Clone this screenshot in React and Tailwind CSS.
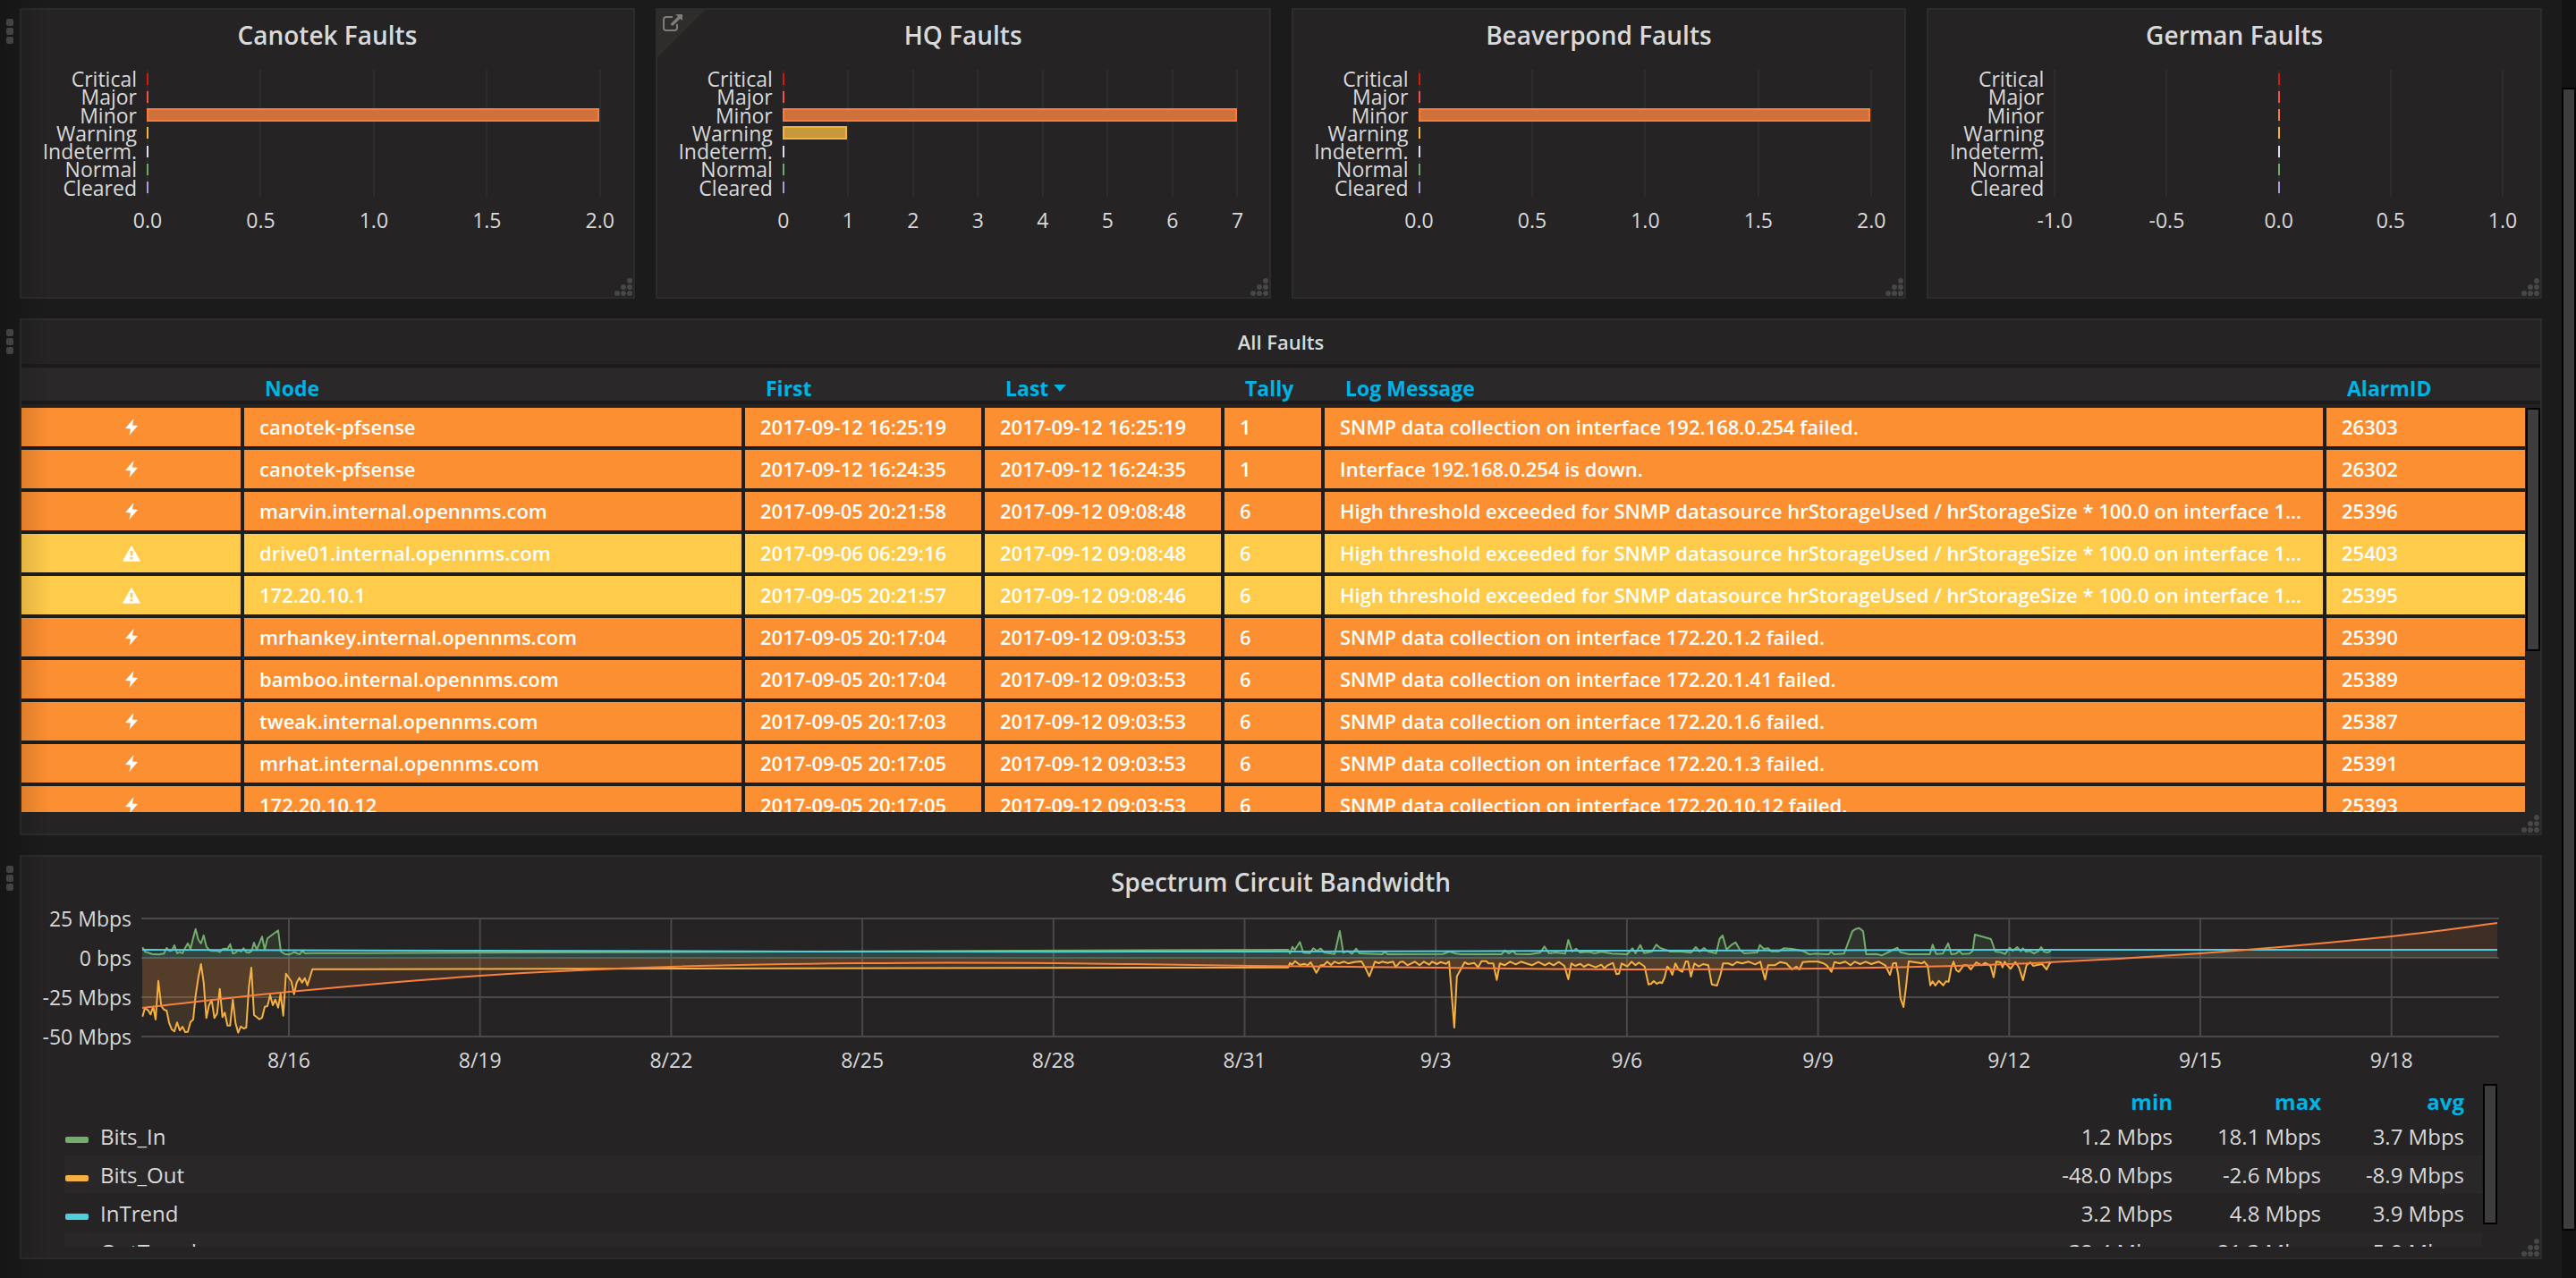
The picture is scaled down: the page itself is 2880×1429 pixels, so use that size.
import React from "react";

const SEVERITIES = [
  { name: "Critical", bar: "border-[#c9190b] bg-[#a01c11]", mark: "bg-[#d41a0b]" },
  { name: "Major", bar: "border-[#ee4f44] bg-[#b9443c]", mark: "bg-[#f25247]" },
  { name: "Minor", bar: "border-[#fb7c3a] bg-[#cf713d]", mark: "bg-[#fb7c3a]" },
  { name: "Warning", bar: "border-[#f4b23f] bg-[#c7983c]", mark: "bg-[#f4b23f]" },
  { name: "Indeterm.", bar: "border-[#dedaf4] bg-[#b0adc0]", mark: "bg-[#dedaf4]" },
  { name: "Normal", bar: "border-[#6dab68] bg-[#5b8a57]", mark: "bg-[#6dab68]" },
  { name: "Cleared", bar: "border-[#a79ddb] bg-[#8780ad]", mark: "bg-[#a79ddb]" },
];

const FAULT_PANELS = [
  { title: "Canotek Faults", ticks: ["0.0", "0.5", "1.0", "1.5", "2.0"], min: 0, max: 2, values: [0, 0, 2, 0, 0, 0, 0], inset: "pr-[37px]" },
  { title: "HQ Faults", ticks: ["0", "1", "2", "3", "4", "5", "6", "7"], min: 0, max: 7, values: [0, 0, 7, 1, 0, 0, 0], inset: "pr-[35px]", linked: true },
  { title: "Beaverpond Faults", ticks: ["0.0", "0.5", "1.0", "1.5", "2.0"], min: 0, max: 2, values: [0, 0, 2, 0, 0, 0, 0], inset: "pr-[37px]" },
  { title: "German Faults", ticks: ["-1.0", "-0.5", "0.0", "0.5", "1.0"], min: -1, max: 1, values: [0, 0, 0, 0, 0, 0, 0], inset: "pr-[42px]" },
];

const HIGH = "High threshold exceeded for SNMP datasource hrStorageUsed / hrStorageSize * 100.0 on interface 1...";

const ALARMS = [
  ["minor", "canotek-pfsense", "2017-09-12 16:25:19", "2017-09-12 16:25:19", "1", "SNMP data collection on interface 192.168.0.254 failed.", "26303"],
  ["minor", "canotek-pfsense", "2017-09-12 16:24:35", "2017-09-12 16:24:35", "1", "Interface 192.168.0.254 is down.", "26302"],
  ["minor", "marvin.internal.opennms.com", "2017-09-05 20:21:58", "2017-09-12 09:08:48", "6", HIGH, "25396"],
  ["warning", "drive01.internal.opennms.com", "2017-09-06 06:29:16", "2017-09-12 09:08:48", "6", HIGH, "25403"],
  ["warning", "172.20.10.1", "2017-09-05 20:21:57", "2017-09-12 09:08:46", "6", HIGH, "25395"],
  ["minor", "mrhankey.internal.opennms.com", "2017-09-05 20:17:04", "2017-09-12 09:03:53", "6", "SNMP data collection on interface 172.20.1.2 failed.", "25390"],
  ["minor", "bamboo.internal.opennms.com", "2017-09-05 20:17:04", "2017-09-12 09:03:53", "6", "SNMP data collection on interface 172.20.1.41 failed.", "25389"],
  ["minor", "tweak.internal.opennms.com", "2017-09-05 20:17:03", "2017-09-12 09:03:53", "6", "SNMP data collection on interface 172.20.1.6 failed.", "25387"],
  ["minor", "mrhat.internal.opennms.com", "2017-09-05 20:17:05", "2017-09-12 09:03:53", "6", "SNMP data collection on interface 172.20.1.3 failed.", "25391"],
  ["minor", "172.20.10.12", "2017-09-05 20:17:05", "2017-09-12 09:03:53", "6", "SNMP data collection on interface 172.20.10.12 failed.", "25393"],
];

const LEGEND = [
  ["Bits_In", "bg-[#73ad6c]", "1.2 Mbps", "18.1 Mbps", "3.7 Mbps"],
  ["Bits_Out", "bg-[#f4b142]", "-48.0 Mbps", "-2.6 Mbps", "-8.9 Mbps"],
  ["InTrend", "bg-[#4fcfde]", "3.2 Mbps", "4.8 Mbps", "3.9 Mbps"],
  ["OutTrend", "bg-[#f9803d]", "-32.4 Mbps", "21.3 Mbps", "-5.9 Mbps"],
];

/* Time series samples, in chart units: 2635 wide, 132 high, zero at 44. */
const project = (samples, kx, ox, oy) =>
  samples.trim().split(/\s+/).map((p) => {
    const [x, y] = p.split(",").map(Number);
    return [x / kx + ox, y / 3 - oy];
  });

const BITS_IN = [
  ...project(
    `58,148 66,162 90,170 112,172 130,169 139,150 148,160 157,158 165,141 174,168 183,163 192,168 201,150 210,134 219,153
     228,116 236,86 245,122 254,135 263,108 272,145 281,156 290,160 308,160 317,164 326,154 335,152 343,154 352,137 361,169
     370,166 379,157 388,162 397,151 406,164 415,166 424,160 432,132 441,156 459,112 468,156 477,118 513,91 522,162 535,170
     549,172 567,164 585,171 594,160 603,168 620,167 780,167`, 3, -19, 17),
  ...project(
    `83,216 87,228 93,206 98,217 110,190 118,226 133,227 141,211 149,220 158,212 166,225 190,230 202,153 210,226 220,220
     230,230 240,212 247,228 300,231 306,223 312,231 440,230 455,222 470,229 480,231 575,231 583,218 592,229 601,219 608,230
     640,231 664,226 674,205 684,228 700,225 722,229 729,183 738,222 747,212 756,225 775,223 790,228 805,223 830,229 865,231
     877,211 884,228 895,200 904,227 922,222 932,199 941,210 955,217 965,222 990,222 1012,226 1023,207 1032,222 1042,210
     1052,222 1070,228 1078,180 1085,168 1094,215 1105,200 1115,191 1125,217 1135,228 1165,225 1171,200 1180,213 1190,211
     1197,221 1215,221 1226,211 1245,213 1270,220 1285,231 1300,229 1330,231 1335,222 1342,231 1365,229 1384,154 1392,146
     1400,143 1409,154 1416,231 1440,230 1452,235 1470,222 1488,209 1495,224 1515,231 1563,231`, 2.063, 1241, 37),
  ...project(
    `122,199 130,230 145,229 157,194 164,231 175,229 182,219 188,230 205,229 212,220 217,165 253,180 263,222 275,224
     285,230 295,209 302,220 312,207 320,221 325,211 332,223 340,220 350,228 360,220 366,207 372,222 380,225 388,220`, 2.01, 1941, 37),
];

const BITS_OUT = [
  ...project(
    `58,380 66,352 76,358 85,373 94,347 102,390 111,260 121,345 130,357 139,360 147,400 156,423 165,430 174,400 183,427
     192,414 201,432 210,431 219,398 228,390 236,310 245,250 254,204 263,265 272,385 281,342 290,325 299,385 308,370 317,287
     326,382 334,367 343,410 352,410 361,323 370,402 379,434 388,413 397,420 406,417 415,280 423,216 432,375 441,382 450,389
     459,384 468,347 477,345 486,308 495,342 503,323 513,350 521,304 530,377 539,236 557,262 566,305 575,266 584,250 593,266
     602,251 611,275 628,221 780,221`, 3, -19, 17),
  ...project(
    `83,275 87,260 92,266 99,254 110,267 120,263 128,268 135,258 148,293 158,268 165,268 173,256 182,267 190,256 200,262
     212,256 222,262 235,257 252,255 262,280 270,305 283,256 292,261 300,256 312,260 325,256 331,274 341,257 348,256 358,268
     375,256 386,268 396,256 408,266 415,256 426,264 435,257 447,263 454,255 466,477 472,305 490,258 498,264 512,260 521,275
     529,254 540,254 545,262 556,262 564,317 571,262 582,268 595,256 608,265 620,256 632,262 645,268 660,257 675,268 685,260
     695,268 707,257 720,270 729,315 736,262 745,270 757,263 765,273 775,265 792,275 805,266 812,278 820,268 832,260 840,298
     846,296 852,262 865,272 875,256 884,268 892,259 905,272 914,332 920,330 926,321 933,330 940,325 945,328 951,310 957,272
     963,280 969,300 976,262 984,284 992,290 1000,255 1005,256 1012,306 1020,262 1030,272 1040,264 1052,268 1060,332
     1072,336 1080,300 1086,262 1098,262 1108,268 1118,257 1130,262 1145,256 1160,265 1172,256 1178,290 1183,316 1190,268
     1205,268 1218,257 1232,262 1245,282 1255,272 1262,282 1270,257 1285,256 1305,256 1318,262 1325,268 1336,290 1343,257
     1355,262 1368,256 1380,268 1390,256 1402,264 1415,256 1428,264 1445,256 1460,268 1471,300 1478,262 1485,260 1490,300
     1495,378 1502,408 1508,340 1514,255 1530,258 1545,262 1550,256 1558,270 1564,335`, 2.063, 1241, 37),
  ...project(
    `122,322 128,336 136,320 146,335 152,322 158,323 164,275 169,256 175,284 181,290 192,268 200,268 208,282 220,258
     232,268 240,260 252,270 259,308 265,256 275,258 279,275 284,256 290,268 297,280 308,257 316,275 325,318 333,268
     342,258 348,270 360,266 368,264 378,282 385,262 388,260`, 2.01, 1941, 37),
];

const IN_TREND = [[0, 35], [378, 36], [800, 37], [1241, 37], [1661, 36], [2087, 35], [2633, 35]];
const OUT_TREND = [[0, 100], [164, 82], [378, 64], [590, 54], [800, 50], [1020, 50], [1241, 53], [1446, 55], [1661, 57], [1874, 56], [2087, 51], [2301, 39], [2515, 20], [2633, 5]];

const f = (n) => n.toFixed(1);
const straight = (pts) => "M" + pts.map(([x, y]) => `${f(x)} ${f(y)}`).join("L");
const smooth = (pts) =>
  pts.reduce((d, [x, y], i) => {
    if (i === 0) return `M${x} ${y}`;
    const a = pts[i - 1];
    const z = pts[i - 2] || a;
    const n = pts[i + 1] || [x, y];
    return `${d}C${f(a[0] + (x - z[0]) / 6)} ${f(a[1] + (y - z[1]) / 6)} ${f(x - (n[0] - a[0]) / 6)} ${f(y - (n[1] - a[1]) / 6)} ${x} ${y}`;
  }, "");

const SERIES = [
  { d: straight(BITS_IN), pts: BITS_IN, color: "#73ad6c" },
  { d: straight(BITS_OUT), pts: BITS_OUT, color: "#f4b142" },
  { d: smooth(IN_TREND), pts: IN_TREND, color: "#4fcfde" },
  { d: smooth(OUT_TREND), pts: OUT_TREND, color: "#f9803d" },
];

const DATES = ["8/16", "8/19", "8/22", "8/25", "8/28", "8/31", "9/3", "9/6", "9/9", "9/12", "9/15", "9/18"];
const dateX = (i) => 164 + i * 213.7;

function Grip() {
  return (
    <svg className="absolute right-0 bottom-0 size-[21px] fill-[#474747]" viewBox="0 0 21 21" aria-hidden="true">
      {[[17, 3], [10, 10], [17, 10], [3, 17], [10, 17], [17, 17]].map(([x, y]) => (
        <circle key={`${x}-${y}`} cx={x} cy={y} r="3" />
      ))}
    </svg>
  );
}

function RowMenu() {
  return (
    <button type="button" aria-label="Row menu" className="absolute top-3 -left-[15px] flex w-2 flex-col gap-[2px]">
      <span className="h-2 rounded-[2px] bg-[#4f4f4f]" />
      <span className="h-2 rounded-[2px] bg-[#4f4f4f]" />
      <span className="h-2 rounded-[2px] bg-[#4f4f4f]" />
    </button>
  );
}

function Panel({ className = "", children }) {
  return (
    <section className={`relative min-w-0 border-2 border-[#2c2c2c] bg-[#252324] ${className}`}>
      {children}
      <Grip />
    </section>
  );
}

function FaultPanel({ panel }) {
  const { title, ticks, min, max, values, inset, linked } = panel;
  const range = max - min;
  return (
    <Panel className="pb-[70px]">
      {linked && (
        <a href="#hq" aria-label="Panel links" className="absolute top-0 left-0 size-[54px] bg-linear-135 from-[#2e2d2b] from-50% to-transparent to-50%">
          <svg className="mt-[5px] ml-[6px] h-[19px] w-[22px]" viewBox="0 0 22 19" fill="none" aria-hidden="true">
            <path d="M11 3H4Q1 3 1 6V15Q1 18 4 18H13Q16 18 16 15V11" stroke="#7d7d7c" strokeWidth="2" />
            <path d="M14 0H22V7L19.500 5L11 13L8.500 11L17 2.500Z" fill="#7d7d7c" />
          </svg>
        </a>
      )}
      <h2 className="pt-[6px] text-center text-[28px] leading-[44px] font-semibold">{title}</h2>
      <div className={`mt-[17px] flex text-[23px] ${inset}`}>
        <ul className="grid w-[129px] shrink-0 grid-rows-7 text-right leading-5">
          {SEVERITIES.map((s) => (
            <li key={s.name}>{s.name}</li>
          ))}
        </ul>
        <div className="relative ml-3 grid h-[142px] flex-1 grid-rows-7">
          <div className="absolute inset-0 -mx-px flex justify-between" aria-hidden="true">
            {ticks.map((t) => (
              <i key={t} className="w-[2px] bg-[#2e2d2e]" />
            ))}
          </div>
          {values.map((v, i) => (
            <div key={i} className="relative flex items-center">
              <div
                className={v ? `h-[15px] border-2 ${SEVERITIES[i].bar}` : `h-[13px] w-[2px] ${SEVERITIES[i].mark}`}
                style={{ width: v ? `${(v / range) * 100}%` : undefined, marginLeft: `calc(${(-min / range) * 100}% - 1px)` }}
              />
            </div>
          ))}
        </div>
      </div>
      <div className={`mt-[10px] ml-[141px] flex justify-between text-[23px] leading-8 ${inset}`}>
        {ticks.map((t) => (
          <span key={t} className="flex w-0 justify-center whitespace-nowrap">{t}</span>
        ))}
      </div>
    </Panel>
  );
}

function Bolt() {
  return (
    <svg className="mx-auto h-[19px] w-[14px] fill-white" viewBox="0 0 14 19" role="img" aria-label="Minor">
      <path d="M9.500 0L0 11L6 11.500L4.500 19L14 8L8 7.500Z" />
    </svg>
  );
}

function Warn() {
  return (
    <svg className="mx-auto h-[18px] w-5" viewBox="0 0 20 18" role="img" aria-label="Warning">
      <path d="M10 1L19 17H1Z" fill="#fff" stroke="#fff" strokeWidth="1.500" strokeLinejoin="round" />
      <path d="M8.500 6H11.500L11.200 11.500H8.800ZM8.600 13H11.400V15.500H8.600Z" fill="#ffcb4a" />
    </svg>
  );
}

function AlarmTable() {
  const head = "border-y-4 border-[#1c1b1b] bg-[#2a2829] h-[45px] p-0 pl-[23px] pt-2 text-left align-middle text-[23px]";
  return (
    <div className="relative mt-[3px] h-[501px] overflow-hidden">
      <table className="w-full table-fixed border-separate border-spacing-0 text-[22px] leading-7 font-semibold text-white">
        <colgroup>
          <col className="w-[249px]" />
          <col className="w-[560px]" />
          <col className="w-[268px]" />
          <col className="w-[268px]" />
          <col className="w-[112px]" />
          <col />
          <col className="w-[222px]" />
          <col className="w-[17px]" />
        </colgroup>
        <thead className="text-[#00b3e3]">
          <tr>
            <th className={head} aria-label="Severity" />
            <th className={head}><button type="button">Node</button></th>
            <th className={head}><button type="button">First</button></th>
            <th className={head} aria-sort="descending">
              <button type="button" className="flex items-center gap-[6px]">
                Last
                <svg className="h-[8px] w-[14px] fill-current" viewBox="0 0 14 8" aria-hidden="true"><path d="M0 0H14L7 8Z" /></svg>
              </button>
            </th>
            <th className={head}><button type="button">Tally</button></th>
            <th className={head}><button type="button">Log Message</button></th>
            <th className={head}><button type="button">AlarmID</button></th>
            <th className="h-[45px] border-y-4 border-[#1c1b1b] bg-[#2a2829] p-0" aria-hidden="true" />
          </tr>
          <tr aria-hidden="true"><td colSpan={8} className="h-1 p-0" /></tr>
        </thead>
        <tbody>
          {ALARMS.map(([severity, ...cells]) => {
            const tone = severity === "minor" ? "bg-[#fc8f31]" : "bg-[#ffcb4a]";
            return (
              <tr key={cells[5]}>
                <td className={`h-[47px] border-r-4 border-b-4 border-[#1c1e1c] p-0 ${tone}`}>
                  {severity === "minor" ? <Bolt /> : <Warn />}
                </td>
                {cells.map((c, i) => (
                  <td key={i} className={`truncate border-b-4 border-[#1c1e1c] pt-0 pr-1 pb-[2px] pl-[17px] ${i < 5 ? "border-r-4" : ""} ${tone}`}>{c}</td>
                ))}
                <td className="p-0" />
              </tr>
            );
          })}
        </tbody>
      </table>
      <div className="absolute top-[49px] right-0 h-[272px] w-4 border-2 border-black bg-[#3d3d3d]" />
    </div>
  );
}

function BandwidthChart() {
  return (
    <figure className="pr-[46px] pl-[14px] text-[23px]">
      <div className="flex">
        <div className="-my-[22px] flex w-[109px] flex-col text-right leading-[44px]">
          {["25 Mbps", "0 bps", "-25 Mbps", "-50 Mbps"].map((t) => (
            <span key={t}>{t}</span>
          ))}
        </div>
        <svg className="ml-3 h-[132px] min-w-0 flex-1 overflow-visible" viewBox="0 0 2635 132" preserveAspectRatio="none" fill="none" role="img" aria-label="Spectrum circuit bandwidth over time">
          <g stroke="#4a494a" strokeWidth="2">
            {[0, 44, 88, 132].map((y) => (
              <path key={y} d={`M-1 ${y}H2635`} />
            ))}
            {DATES.map((t, i) => (
              <path key={t} d={`M${f(dateX(i))} 0V132`} />
            ))}
          </g>
          {SERIES.map((s) => (
            <path key={s.color} d={`${s.d}L${f(s.pts[s.pts.length - 1][0])} 44L0 44Z`} fill={s.color} fillOpacity="0.120" />
          ))}
          {SERIES.map((s) => (
            <path key={s.color} d={s.d} stroke={s.color} strokeWidth="2" strokeLinejoin="round" />
          ))}
        </svg>
      </div>
      <div className="relative mt-[10px] ml-[121px] h-8 leading-8">
        {DATES.map((t, i) => (
          <span key={t} className="absolute flex w-0 justify-center" style={{ left: `${(dateX(i) / 2635) * 100}%` }}>{t}</span>
        ))}
      </div>
    </figure>
  );
}

function LegendTable() {
  return (
    <div className="relative mt-[5px] mr-[48px] ml-12 h-[188px] overflow-hidden">
      <div className="mr-[17px]">
        <table className="w-full table-fixed text-right text-2xl leading-8">
          <colgroup>
            <col />
            <col className="w-[190px]" />
            <col className="w-[166px]" />
            <col className="w-[160px]" />
          </colgroup>
          <thead className="text-[#00b3e3]">
            <tr className="h-[43px]">
              <th aria-label="Series" />
              <th className="p-0 pt-2 pr-5"><button type="button">min</button></th>
              <th className="p-0 pt-2 pr-5"><button type="button">max</button></th>
              <th className="p-0 pt-2 pr-5"><button type="button">avg</button></th>
            </tr>
          </thead>
          <tbody>
            {LEGEND.map(([name, swatch, ...stats]) => (
              <tr key={name} className="h-[43px] even:bg-[#292728]">
                <th scope="row" className="p-0 pl-px text-left font-normal">
                  <button type="button" className="flex items-center gap-[13px]">
                    <i className={`mt-2 h-[7px] w-[26px] rounded-[2px] ${swatch}`} />
                    {name}
                  </button>
                </th>
                {stats.map((s) => (
                  <td key={s} className="p-0 pr-5">{s}</td>
                ))}
              </tr>
            ))}
          </tbody>
        </table>
      </div>
      <div className="absolute top-[6px] right-0 h-[157px] w-4 border-2 border-black bg-[#3d3d3d]" />
    </div>
  );
}

export default function App() {
  return (
    <div className="relative flex min-h-screen bg-[#1b1b1b] font-['Open_Sans','Noto_Sans',sans-serif] text-[#d8d9da]">
      <main className="flex min-w-0 flex-1 flex-col gap-[22px] px-[22px] pt-[9px] pb-5">
        <div className="relative grid grid-cols-4 gap-[23px]">
          <RowMenu />
          {FAULT_PANELS.map((p) => (
            <FaultPanel key={p.title} panel={p} />
          ))}
        </div>
        <div className="relative">
          <RowMenu />
          <Panel className="pb-6">
            <h2 className="pt-[2px] text-center text-[22px] leading-[44px] font-semibold">All Faults</h2>
            <AlarmTable />
          </Panel>
        </div>
        <div className="relative">
          <RowMenu />
          <Panel className="pb-[12px]">
            <h2 className="pt-[6px] pb-[19px] text-center text-[28px] leading-[44px] font-semibold">Spectrum Circuit Bandwidth</h2>
            <BandwidthChart />
            <LegendTable />
          </Panel>
        </div>
      </main>
      <div className="flex w-4 flex-col bg-[#131313] pt-[98px]" aria-hidden="true">
        <div className="h-[1278px] border-2 border-black bg-[#3d3d3d]" />
      </div>
      <div className="pointer-events-none absolute inset-y-0 left-0 w-14 bg-linear-to-r from-black/20 to-transparent" />
    </div>
  );
}
